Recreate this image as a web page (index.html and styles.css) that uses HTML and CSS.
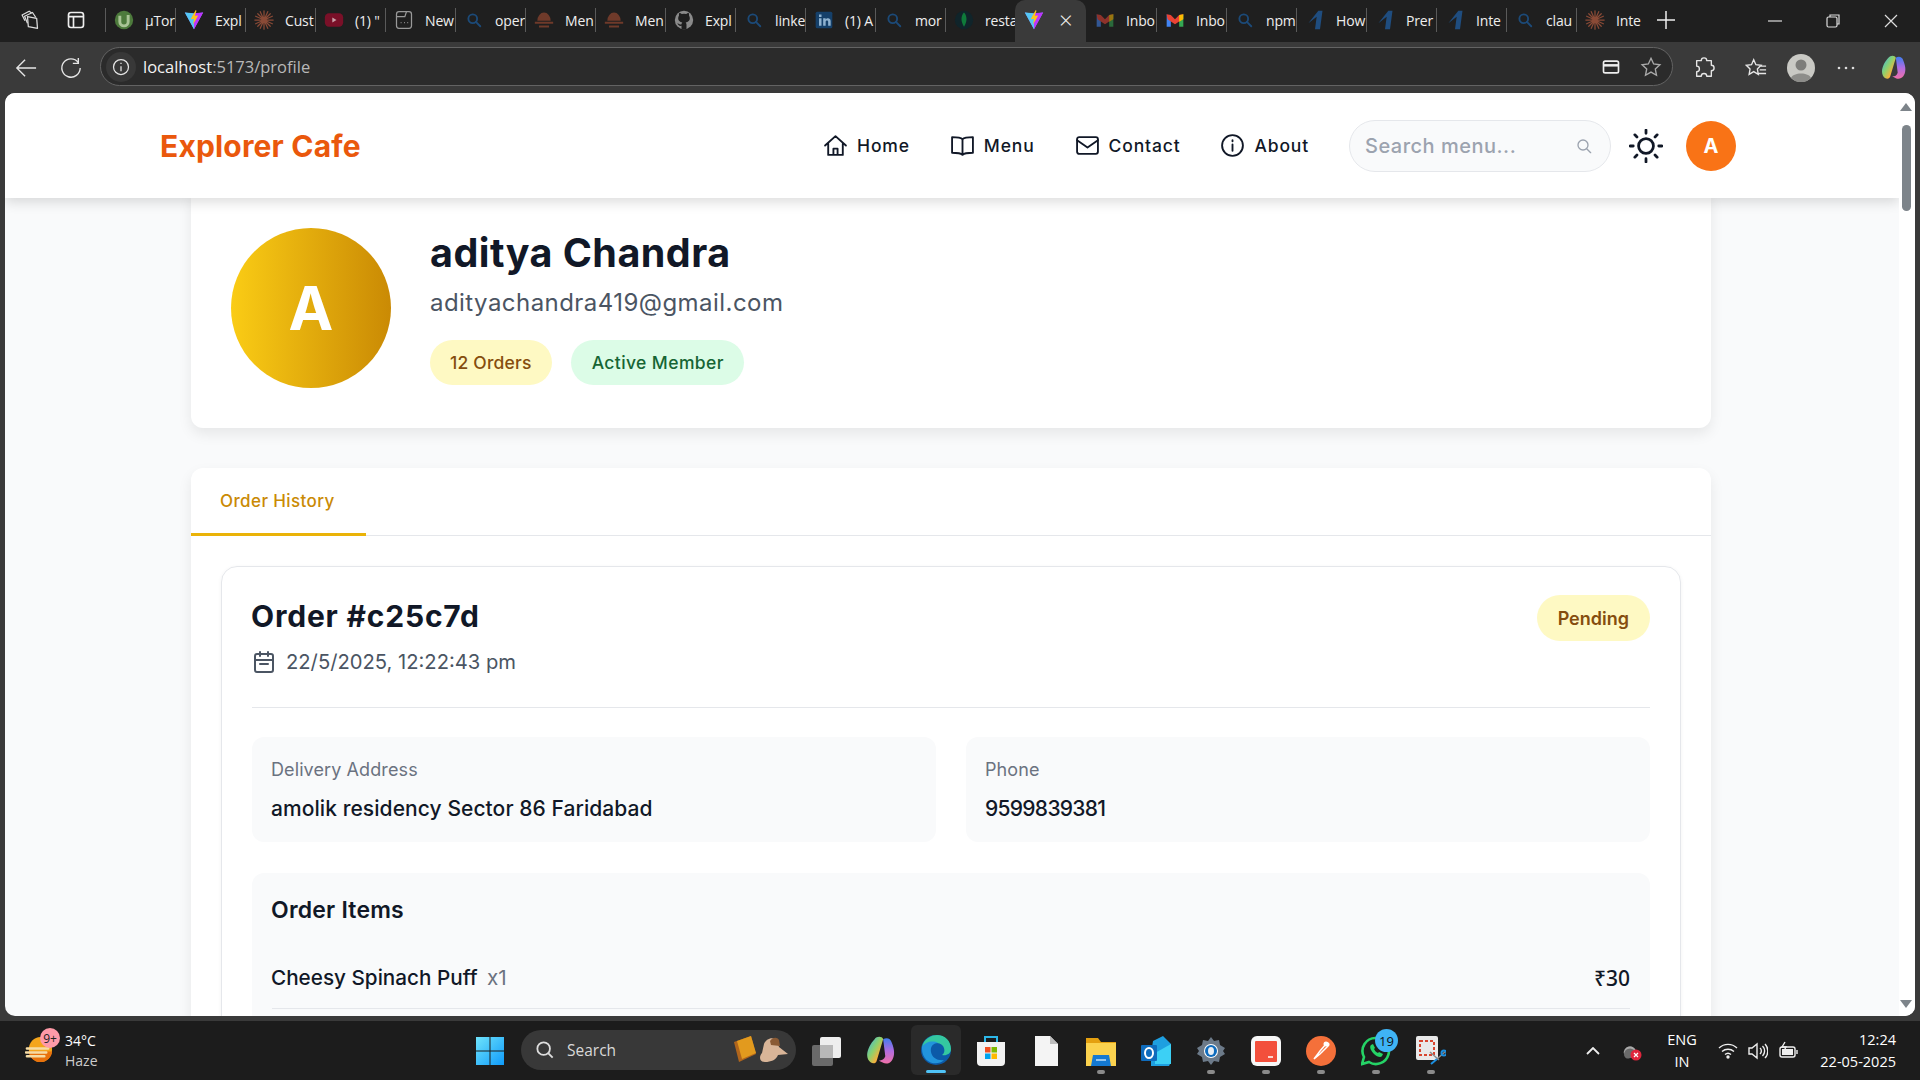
FILE: index.html
```html
<!DOCTYPE html>
<html lang="en">
<head>
<meta charset="utf-8">
<title>Explorer Cafe</title>
<link rel="stylesheet" href="styles.css">
</head>
<body>
<svg class="defs" width="0" height="0" aria-hidden="true">
  <defs><linearGradient id="cp" x1="0" y1="0" x2="1" y2="1"><stop offset="0" stop-color="#2fb5f0"/><stop offset=".45" stop-color="#8ed16c"/><stop offset=".72" stop-color="#f5b13c"/><stop offset="1" stop-color="#f0476f"/></linearGradient>
  <linearGradient id="cp2" x1="0" y1="0" x2="0" y2="1"><stop offset="0" stop-color="#3f7df0"/><stop offset=".5" stop-color="#b06ce0"/><stop offset="1" stop-color="#f070a8"/></linearGradient></defs>
  <symbol id="vite" viewBox="0 0 24 24"><path d="M1 3l10 1.500L23 3 12 23z" fill="#7d78ff"/><path d="M1 3l11 20V4z" fill="#55c7f5"/><path d="M12 4l11-1-11 20z" fill="#bd34fe"/><path d="M14 0L8 11l4-.5-1 7 6-11-4 .5 2-6z" fill="#ffc517"/></symbol>
  <symbol id="claude" viewBox="0 0 24 24"><g stroke="#8a4a36" stroke-width="1.500" stroke-linecap="round"><path d="M12 1v22M1 12h22M4.500 4.500l15 15M19.500 4.500l-15 15M7.500 2l9 20M16.500 2l-9 20M2 7.500l20 9M22 7.500l-20 9"/></g></symbol>
  <symbol id="mag" viewBox="-4 -4 32 32"><circle cx="10" cy="10" r="7" fill="none" stroke="#1c4a78" stroke-width="3"/><path d="M15 15l7 7" stroke="#1c4a78" stroke-width="3" stroke-linecap="round"/></symbol>
  <symbol id="hat" viewBox="0 0 24 24"><path d="M4 13a8 10 0 0116 0z" fill="#6f3a2a"/><path d="M1 14h22v2.500H1zM6 18.500h12V21H6z" fill="#6f3a2a"/></symbol>
  <symbol id="gmail" viewBox="0 0 24 24"><path d="M2 5v15h5V11z" fill="#4285f4"/><path d="M22 5v15h-5V11z" fill="#34a853"/><path d="M2 5l5 1 5 5 5-5 5-1-1 6-9 6-9-6z" fill="#ea4335"/><path d="M17 6l5-1v6l-5 3z" fill="#fbbc04"/></symbol>
  <symbol id="one" viewBox="0 0 24 24"><path d="M16 1h5l-3 22h-6l2-15-10 8z" fill="#1f4d7f"/></symbol>
</svg>

<div class="tabstrip">
  <div class="strip-left">
    <svg class="ic20" viewBox="0 0 24 24" fill="none" stroke="#ddd" stroke-width="1.500" stroke-linejoin="round"><path d="M9 8l11 2 1 12-11-2z"/><path d="M9 16L5.500 7.500 15 3l4 6"/><path d="M6 13L2.500 6 11 1.500l3 2"/></svg>
    <svg class="ic20" viewBox="0 0 24 24" fill="none" stroke="#eee" stroke-width="2"><rect x="3" y="3" width="18" height="18" rx="3"/><path d="M3 8h18M9 8v13"/></svg>
  </div>
  <div class="tabs">
    <div class="tab"><svg class="fav" viewBox="0 0 24 24"><circle cx="12" cy="12" r="11" fill="#4d7a3c"/><path d="M7 7v7a5 5 0 0010 0V6" fill="none" stroke="#a9c496" stroke-width="3.500"/></svg><span class="tab-text">µTor</span></div>
    <div class="tab"><svg class="fav"><use href="#vite"/></svg><span class="tab-text">Expl</span></div>
    <div class="tab"><svg class="fav"><use href="#claude"/></svg><span class="tab-text">Cust</span></div>
    <div class="tab"><svg class="fav" viewBox="0 0 24 24"><rect x="1" y="4" width="22" height="16" rx="5" fill="#7a1028"/><path d="M10 9l5 3-5 3z" fill="#c9a0a8"/></svg><span class="tab-text">(1) "</span></div>
    <div class="tab"><svg class="fav" viewBox="0 0 24 24" fill="none" stroke="#999" stroke-width="1.500"><rect x="3" y="2" width="18" height="20" rx="3"/><path d="M3 8h10l2-6M8 15h1M12 15h1M16 15h1"/></svg><span class="tab-text">New</span></div>
    <div class="tab"><svg class="fav"><use href="#mag"/></svg><span class="tab-text">oper</span></div>
    <div class="tab"><svg class="fav"><use href="#hat"/></svg><span class="tab-text">Men</span></div>
    <div class="tab"><svg class="fav"><use href="#hat"/></svg><span class="tab-text">Men</span></div>
    <div class="tab"><svg class="fav" viewBox="0 0 24 24"><circle cx="12" cy="12" r="11" fill="#8a8a8a"/><path d="M9 23v-4c-3 .5-4-1-5-3 2 .5 3 2 5 1 0-1 .5-1.500 1-2-3-.5-5-2-5-5 0-1.500.5-2.500 1-3.500-.2-1 0-2 .3-3 1.200 0 2.200.7 3.200 1.300a10 10 0 015 0c1-.6 2-1.300 3.200-1.300.3 1 .5 2 .3 3 .5 1 1 2 1 3.500 0 3-2 4.500-5 5 .7.600 1 1.500 1 2.500V23z" fill="#1e1e1e"/></svg><span class="tab-text">Expl</span></div>
    <div class="tab"><svg class="fav"><use href="#mag"/></svg><span class="tab-text">linke</span></div>
    <div class="tab"><svg class="fav" viewBox="0 0 24 24"><rect x="2" y="2" width="20" height="20" rx="2" fill="#15406a"/><path d="M6 10h3v9H6zM6 5.500h3v3H6zM11 10h3v1.500c1-2 6-2.500 6 2V19h-3v-5c0-2-3-2-3 0v5h-3z" fill="#8fb2d0"/></svg><span class="tab-text">(1) A</span></div>
    <div class="tab"><svg class="fav"><use href="#mag"/></svg><span class="tab-text">mor</span></div>
    <div class="tab"><svg class="fav" viewBox="0 0 24 24"><circle cx="12" cy="12" r="11" fill="#10242a"/><path d="M12 3c4 4 4 11 0 17-4-6-4-13 0-17z" fill="#0f7a3a"/></svg><span class="tab-text">resta</span></div>
    <div class="tab tab-active"><svg class="fav"><use href="#vite"/></svg><span class="tab-close">×</span></div>
    <div class="tab"><svg class="fav tab-dim"><use href="#gmail"/></svg><span class="tab-text">Inbo</span></div>
    <div class="tab"><svg class="fav"><use href="#gmail"/></svg><span class="tab-text">Inbo</span></div>
    <div class="tab"><svg class="fav"><use href="#mag"/></svg><span class="tab-text">npm</span></div>
    <div class="tab"><svg class="fav"><use href="#one"/></svg><span class="tab-text">How</span></div>
    <div class="tab"><svg class="fav"><use href="#one"/></svg><span class="tab-text">Prer</span></div>
    <div class="tab"><svg class="fav"><use href="#one"/></svg><span class="tab-text">Inte</span></div>
    <div class="tab"><svg class="fav"><use href="#mag"/></svg><span class="tab-text">clau</span></div>
    <div class="tab"><svg class="fav"><use href="#claude"/></svg><span class="tab-text">Inte</span></div>
  </div>
  <svg class="new-tab" viewBox="0 0 20 20" stroke="#eee" stroke-width="1.500"><path d="M10 1v18M1 10h18"/></svg>
  <div class="win-controls">
    <svg class="win" viewBox="0 0 14 14" stroke="#ddd" stroke-width="1.200" fill="none"><path d="M0 7h14"/></svg>
    <svg class="win" viewBox="0 0 14 14" stroke="#ddd" stroke-width="1.200" fill="none"><rect x="1" y="3" width="10" height="10" rx="1.500"/><path d="M4 3V1h9v9h-2"/></svg>
    <svg class="win" viewBox="0 0 14 14" stroke="#ddd" stroke-width="1.200" fill="none"><path d="M1 1l12 12M13 1L1 13"/></svg>
  </div>
</div>

<div class="toolbar">
  <svg class="tool tool-back" viewBox="0 0 24 24" fill="none" stroke="#e6e6e6" stroke-width="1.500"><path d="M23 12H2M11 3l-9 9 9 9"/></svg>
  <svg class="tool tool-reload" viewBox="0 0 24 24" fill="none" stroke="#e6e6e6" stroke-width="1.500"><path d="M20 6a10 10 0 102 6"/><path d="M20 1v6h-6"/></svg>
  <div class="addr">
    <span class="addr-info"><svg class="ic20" viewBox="0 0 24 24" fill="none" stroke="#e6e6e6" stroke-width="1.500"><circle cx="12" cy="12" r="9"/><path d="M12 11v6M12 7v1.500"/></svg></span>
    <span class="url"><b>localhost</b>:5173/profile</span>
    <span class="addr-end">
      <svg class="ic20" viewBox="0 0 24 24" fill="none" stroke="#eee" stroke-width="2"><rect x="3" y="5" width="18" height="14" rx="2"/><path d="M3 10h18" stroke-width="3"/></svg>
      <svg class="ic22" viewBox="0 0 24 24" fill="none" stroke="#aaa" stroke-width="1.500"><path d="M12 2.500l2.900 6.200 6.800.8-5 4.700 1.300 6.800-6-3.400-6 3.400 1.300-6.800-5-4.700 6.800-.8z"/></svg>
    </span>
  </div>
  <div class="tool-right">
    <svg class="ic22 tr-ext" viewBox="0 0 24 24" fill="none" stroke="#e6e6e6" stroke-width="1.500"><path d="M9 4a3 3 0 016 0h5v5a3 3 0 010 6v6h-5a3 3 0 00-6 0H4v-5a3 3 0 000-6V4z" stroke-linejoin="round"/></svg>
    <svg class="ic22 tr-fav" viewBox="0 0 24 24" fill="none" stroke="#e6e6e6" stroke-width="1.500"><path d="M9.500 3l2.400 5.400 5.600.7-4 4 1 5.900-5-3-5 3 1-5.900-4-4 5.600-.7zM16 10h7M16 14h7M15 18h8"/></svg>
    <svg class="tool-avatar" viewBox="0 0 28 28"><circle cx="14" cy="14" r="14" fill="#c9c9c4"/><circle cx="14" cy="11" r="5.500" fill="#7d7d7a"/><path d="M4 24c2-6 18-6 20 0a14 14 0 01-20 0z" fill="#8d8d8a"/></svg>
    <svg class="ic20 tr-dots" viewBox="0 0 20 20" fill="#ddd"><circle cx="3" cy="10" r="1.300"/><circle cx="10" cy="10" r="1.300"/><circle cx="17" cy="10" r="1.300"/></svg>
    <svg class="tool-copilot" viewBox="0 0 28 28"><path d="M16 3c3-2 7-1 8 3 3 7 3 13 0 17-2 3-6 3-8 2l-4-2c3 0 5-1 6-4z" fill="url(#cp2)"/><path d="M8 3c2-3 7-3 8 0l-6 20c-1 4-6 3-8-1-3-6 2-15 6-19z" fill="url(#cp)"/></svg>
  </div>
</div>

<div class="viewport">
  <div class="page">
    <header class="site-header">
      <div class="logo">Explorer Cafe</div>
      <nav class="nav">
        <a class="nav-link"><svg class="nav-ic" viewBox="0 0 24 24"><path d="M2 12l10-9 10 9M5 10v11h14V10M10 21v-6h4v6"/></svg>Home</a>
        <a class="nav-link"><svg class="nav-ic" viewBox="0 0 24 24"><path d="M12 6C10 4 6 4 2 4v15c4 0 8 0 10 2 2-2 6-2 10-2V4c-4 0-8 0-10 2zM12 6v15"/></svg>Menu</a>
        <a class="nav-link"><svg class="nav-ic" viewBox="0 0 24 24"><rect x="2" y="4" width="20" height="16" rx="2"/><path d="M2 7l10 7 10-7"/></svg>Contact</a>
        <a class="nav-link"><svg class="nav-ic" viewBox="0 0 24 24"><circle cx="12" cy="12" r="10"/><path d="M12 11v6M12 7v1"/></svg>About</a>
      </nav>
      <div class="search"><span class="search-ph">Search menu...</span><svg class="search-ic" viewBox="0 0 24 24"><circle cx="10.500" cy="10.500" r="7.500"/><path d="M16 16l6 6"/></svg></div>
      <svg class="sun" viewBox="0 0 32 32"><circle cx="16" cy="16" r="7"/><path d="M16 1v3M16 28v3M1 16h3M28 16h3M5.500 5.500l2 2M24.500 24.500l2 2M5.500 26.500l2-2M24.500 7.500l2-2"/></svg>
      <div class="head-avatar">A</div>
    </header>
    <main class="content">
      <section class="card profile">
        <div class="avatar">A</div>
        <div class="who">
          <h1 class="name">aditya Chandra</h1>
          <p class="email">adityachandra419@gmail.com</p>
          <div class="chips"><span class="chip chip-y">12 Orders</span><span class="chip chip-g">Active Member</span></div>
        </div>
      </section>
      <section class="card orders">
        <div class="tabs-row"><div class="page-tab">Order History</div></div>
        <div class="order-wrap">
          <article class="order">
            <div class="order-head">
              <div>
                <h2 class="order-id">Order #c25c7d</h2>
                <div class="order-date"><svg class="cal" viewBox="0 0 24 24"><rect x="3" y="4" width="18" height="18" rx="2"/><path d="M16 2v4M8 2v4M3 10h18M8 14h8"/></svg>22/5/2025, 12:22:43 pm</div>
              </div>
              <span class="status">Pending</span>
            </div>
            <div class="info-grid">
              <div class="info"><div class="info-label">Delivery Address</div><div class="info-val">amolik residency Sector 86 Faridabad</div></div>
              <div class="info"><div class="info-label">Phone</div><div class="info-val info-digits">9599839381</div></div>
            </div>
            <div class="items">
              <h3 class="items-title">Order Items</h3>
              <div class="item"><span class="item-name">Cheesy Spinach Puff <span class="qty">x1</span></span><span class="price">₹30</span></div>
            </div>
          </article>
        </div>
      </section>
    </main>
  </div>
  <div class="scrollbar">
    <span class="sb-arrow sb-up"></span>
    <span class="sb-thumb"></span>
    <span class="sb-arrow sb-down"></span>
  </div>
</div>

<div class="taskbar">
  <div class="weather">
    <div class="weather-ic">
      <svg class="weather-sun" viewBox="0 0 30 30"><ellipse cx="16" cy="15" rx="12" ry="13" fill="#f4a51c"/><path d="M16 28c7 0 12-6 12-11H4c0 5 5 11 12 11z" fill="#e8720c"/><path d="M2 14h22M1 18h21M2 22h18" stroke="#f6dca4" stroke-width="2.600" stroke-linecap="round"/></svg>
      <span class="wbadge">9+</span>
    </div>
    <div class="wtext"><div>34°C</div><div class="haze">Haze</div></div>
  </div>
  <div class="tb-center">
    <svg class="tb-ic tb-win" viewBox="0 0 30 30"><defs><linearGradient id="wg" x1="0" y1="0" x2="1" y2="1"><stop offset="0" stop-color="#6fe3fb"/><stop offset="1" stop-color="#0f9bfa"/></linearGradient></defs><path d="M1 1h13.500v13.500H1zM15.500 1H29v13.500H15.500zM1 15.500h13.500V29H1zM15.500 15.500H29V29H15.500z" fill="url(#wg)"/></svg>
    <div class="tb-search">
      <svg class="tb-search-ic" viewBox="0 0 20 20" fill="none" stroke="#ddd" stroke-width="2"><circle cx="8.500" cy="8.500" r="7"/><path d="M13.500 13.500l5 5"/></svg>
      <span class="tb-search-text">Search</span>
      <svg class="tb-hero" viewBox="0 0 58 30"><path d="M2 7l17-6 5 18-17 8z" fill="#b0651c"/><path d="M5 6l14-5 5 17-14 6z" fill="#e29a1e"/><path d="M33 27c-6 0-6-6-3-9l2-9c2-6 10-8 13-3l2 6 9 7-10 1c-2 5-7 7-13 7z" fill="#d9b598"/><path d="M38 6c3-4 7-4 9-1l1 6-9-1z" fill="#8a5a34"/></svg>
    </div>
    <svg class="tb-ic" viewBox="0 0 30 30"><rect x="9" y="1" width="21" height="21" rx="2" fill="#eee"/><rect x="1" y="9" width="21" height="21" rx="2" fill="#6a6a6a"/><rect x="9" y="9" width="13" height="13" fill="#b8b8b8"/></svg>
    <svg class="tb-ic" viewBox="0 0 28 28"><path d="M16 3c3-2 7-1 8 3 3 7 3 13 0 17-2 3-6 3-8 2l-4-2c3 0 5-1 6-4z" fill="url(#cp2)"/><path d="M8 3c2-3 7-3 8 0l-6 20c-1 4-6 3-8-1-3-6 2-15 6-19z" fill="url(#cp)"/></svg>
    <div class="tb-tile">
      <svg class="tb-ic" viewBox="0 0 30 30"><circle cx="15" cy="15" r="15" fill="#0c5aa8"/><path d="M1 12C3 3 11 0 16 0c8 0 14 6 14 14 0 5-5 7-9 6 3-2 3-6 1-9C18 6 8 7 1 12z" fill="#34c7a0"/><path d="M1 12C4 7 12 5 17 8c-5 0-8 4-7 9 1 6 7 9 13 8-7 7-23 3-22-13z" fill="#2294dc"/></svg>
      <span class="tb-active"></span>
    </div>
    <svg class="tb-ic" viewBox="0 0 30 30"><path d="M9 6V1h12v5" fill="none" stroke="#2cb7e8" stroke-width="2"/><path d="M1 6h28v20a4 4 0 01-4 4H5a4 4 0 01-4-4z" fill="#f2f2f2"/><path d="M9 11h5.500v5.500H9z" fill="#f25022"/><path d="M15.500 11H21v5.500h-5.500z" fill="#7fba00"/><path d="M9 17.500h5.500V23H9z" fill="#00a4ef"/><path d="M15.500 17.500H21V23h-5.500z" fill="#ffb900"/></svg>
    <svg class="tb-ic" viewBox="0 0 30 30"><path d="M4 0h15l8 8v22H4z" fill="#f4f4f4"/><path d="M19 0l8 8h-8z" fill="#bdbdbd"/></svg>
    <span class="tb-app tb-dot"><svg class="tb-ic" viewBox="0 0 30 30"><path d="M0 2h12l3 4h15v24H0z" fill="#e4a010"/><path d="M0 7h30v23H0z" fill="#fbd24e"/><path d="M5 30l2-11h16l2 11z" fill="#1479d2"/><path d="M10 24h10" stroke="#bfe0fa" stroke-width="1.500"/></svg></span>
    <svg class="tb-ic" viewBox="0 0 30 30"><path d="M12 5L22 0l8 8v18l-2 4H10V18z" fill="#1e9fe0"/><path d="M14 17l16-9v20H14z" fill="#3cd0f5"/><rect x="0" y="9" width="16" height="16" rx="1" fill="#0f6cbd"/><ellipse cx="8" cy="17" rx="4" ry="5" fill="none" stroke="#fff" stroke-width="2"/></svg>
    <span class="tb-app tb-dot"><svg class="tb-ic" viewBox="0 0 30 30"><path d="M15 1l3 4 5-1 1 5 5 3-2 3 2 3-5 3-1 5-5-1-3 4-3-4-5 1-1-5-5-3 2-3-2-3 5-3 1-5 5 1z" fill="#6c7a89"/><circle cx="15" cy="15" r="7" fill="#fff"/><circle cx="15" cy="15" r="6" fill="#0f6cbd"/><ellipse cx="15" cy="15" rx="3" ry="4" fill="#e8eef4"/></svg></span>
    <span class="tb-app tb-dot"><svg class="tb-ic" viewBox="0 0 30 30"><rect width="30" height="30" rx="6" fill="#f7f7f7"/><rect x="4" y="5" width="22" height="21" rx="1" fill="#f34f3c"/><path d="M17 21h5" stroke="#fff" stroke-width="1.500"/></svg></span>
    <span class="tb-app tb-dot"><svg class="tb-ic" viewBox="0 0 30 30"><circle cx="15" cy="15" r="15" fill="#f4703a"/><path d="M8 23l6-8 6-7c2-2 4 0 2 2l-8 8z" fill="none" stroke="#fff" stroke-width="1.500"/><circle cx="20" cy="8" r="2.500" fill="#fff"/></svg></span>
    <span class="tb-app tb-dot tb-wa"><svg class="tb-ic" viewBox="0 0 30 30"><path d="M15 2a13 13 0 11-7 24L1 28l2-7A13 13 0 0115 2z" fill="none" stroke="#25d366" stroke-width="2.600"/><path d="M10 9c-2 2 0 6 3 9s7 4 8 2l1-2-4-2-1 1c-2-1-3-2-4-4l1-1-2-4z" fill="#25d366"/></svg><span class="wa-badge">19</span></span>
    <span class="tb-app tb-dot"><svg class="tb-ic" viewBox="0 0 30 30"><rect width="22" height="24" rx="2" fill="#e9e9e9"/><rect x="4" y="5" width="14" height="14" fill="none" stroke="#d8452f" stroke-width="2" stroke-dasharray="3 2"/><path d="M14 16l9 8m7-9l-9 8" stroke="#8a8a8a" stroke-width="1.500"/><circle cx="28" cy="17" r="2.500" fill="none" stroke="#1c8fe0" stroke-width="2"/><path d="M21 23l-6 5" stroke="#1c8fe0" stroke-width="2"/></svg></span>
  </div>
  <div class="tray">
    <svg class="tray-chev" viewBox="0 0 14 8" fill="none" stroke="#eee" stroke-width="1.800"><path d="M1 7l6-6 6 6"/></svg>
    <span class="tray-cloud"><svg class="ic20" viewBox="0 0 20 20"><path d="M2 13a6 6 0 0112-3l4 3z" fill="#aaa"/><path d="M2 13a4 4 0 006 4h4V9a6 6 0 00-10 4z" fill="#6a6a6a"/><circle cx="14" cy="14" r="5.500" fill="#e0263c"/><path d="M12 12l4 4M16 12l-4 4" stroke="#fff" stroke-width="1.200"/></svg></span>
    <div class="lang"><div>ENG</div><div>IN</div></div>
    <div class="tray-ics">
      <svg class="ic20" viewBox="0 0 20 20" fill="none" stroke="#eee" stroke-width="1.400"><path d="M1 7a13 13 0 0118 0M4 10.500a9 9 0 0112 0M7 13.500a4.500 4.500 0 016 0"/><circle cx="10" cy="16" r="1" fill="#eee"/></svg>
      <svg class="ic20" viewBox="0 0 20 20" fill="none" stroke="#eee" stroke-width="1.400"><path d="M1 7v6h3l5 4V3L4 7zM12 7a4 4 0 010 6M14.500 5a7 7 0 010 10M17 3a10 10 0 010 14"/></svg>
      <svg class="ic20" viewBox="0 0 20 20" fill="none" stroke="#eee" stroke-width="1.400"><rect x="2" y="6" width="15" height="10" rx="2"/><path d="M19 9v4"/><rect x="4" y="8" width="11" height="6" fill="#eee" stroke="none"/><path d="M7 1L4 6h4L6 10" stroke="#eee"/></svg>
    </div>
    <div class="clock"><div>12:24</div><div>22-05-2025</div></div>
  </div>
</div>
</body>
</html>
```
FILE: styles.css
```css
* { box-sizing: border-box; }
html, body { margin: 0; height: 100%; overflow: hidden; }
body {
  display: flex; flex-direction: column; width: 1920px; height: 1080px;
  background: #3a3a3a; font-family: Inter, "Noto Sans", sans-serif; color: #111827;
}
.defs { position: absolute; }
h1, h2, h3, p { margin: 0; }
.ic20 { width: 20px; height: 20px; flex: none; }
.ic22 { width: 22px; height: 22px; flex: none; }

/* tab strip */
.tabstrip { height: 42px; flex: none; background: #1f1f1f; display: flex; align-items: stretch; font-family: "Open Sans", sans-serif; }
.strip-left { width: 105px; display: flex; align-items: center; gap: 26px; padding: 0 0 2px 20px; flex: none; }
.tabs { display: flex; flex: none; }
.tab { width: 70px; flex: none; display: flex; align-items: center; gap: 11px; padding: 0 0 2px 9px; }
.tab { background: linear-gradient(#5a5a5a, #5a5a5a) left 8px / 1px 24px no-repeat; }
.fav { width: 20px; height: 20px; flex: none; }
.tab-dim { opacity: .55; }
.tab-text { color: #eee; font-size: 14px; white-space: nowrap; letter-spacing: -.15px; }
.tab-active { background: #3a3a3a; border-radius: 10px 10px 0 0; gap: 15px; width: 71px; }
.tab-active + .tab { background: none; }
.tab-close { color: #eee; font-size: 24px; line-height: 1; font-weight: 300; }
.new-tab { width: 20px; height: 20px; align-self: center; margin: 0 0 2px 10px; flex: none; }
.win-controls { margin-left: auto; display: flex; align-items: center; gap: 44px; padding-right: 22px; }
.win { width: 14px; height: 14px; }

/* toolbar */
.toolbar { height: 51px; flex: none; background: #3a3a3a; display: flex; align-items: center; padding-left: 15px; }
.tool { width: 22px; height: 22px; flex: none; }
.tool-back { margin-right: 23px; }
.tool-reload { margin-right: 18px; }
.addr { width: 1573px; height: 39px; border: 1px solid #636363; border-radius: 20px; background: #2b2b2b; display: flex; align-items: center; padding: 0 10px 0 5px; margin-top: -2px; }
.addr-info { width: 30px; height: 30px; border-radius: 50%; background: #383838; display: flex; align-items: center; justify-content: center; }
.url { margin-left: 7px; font-family: "Open Sans", sans-serif; font-size: 16.500px; color: #b8b8b8; }
.url b { font-weight: 400; color: #f2f2f2; }
.addr-end { margin-left: auto; display: flex; align-items: center; gap: 19px; }
.tool-right { display: flex; align-items: center; margin-left: 20px; }
.tr-fav { margin-left: 30px; }
.tool-avatar { width: 28px; height: 28px; margin-left: 20px; flex: none; }
.tr-dots { margin-left: 21px; }
.tool-copilot { width: 26px; height: 26px; margin-left: 25px; flex: none; }

/* viewport */
.viewport { height: 923px; flex: none; margin: 0 5px; background: #f9fafb; border-radius: 10px; overflow: hidden; display: flex; }
.page { width: 1894px; flex: none; display: flex; flex-direction: column; overflow: hidden; }
.site-header { height: 105px; flex: none; background: #fff; box-shadow: 0 4px 12px rgba(0,0,0,.14); position: relative; z-index: 2; display: flex; align-items: center; padding: 0 163px 0 155px; }
.logo { font-size: 30px; font-weight: 700; color: #ea580c; margin-right: auto; letter-spacing: .17px; }
.nav { display: flex; gap: 40px; margin-right: 40px; }
.nav-link { display: flex; align-items: center; gap: 9px; font-size: 17.500px; font-weight: 450; letter-spacing: .85px; color: #111827; }
.nav-ic { width: 25px; height: 25px; fill: none; stroke: #111827; stroke-width: 1.800; stroke-linejoin: round; stroke-linecap: round; }
.search { width: 262px; height: 52px; border: 1px solid #e5e7eb; border-radius: 26px; background: #f9fafb; display: flex; align-items: center; justify-content: space-between; padding: 0 18px 0 15px; }
.search-ph { font-size: 20px; color: #9ca3af; letter-spacing: .5px; font-weight: 450; }
.search-ic { width: 16px; height: 16px; fill: none; stroke: #9ca3af; stroke-width: 2; stroke-linecap: round; }
.sun { width: 34px; height: 34px; margin: 0 23px 0 18px; fill: none; stroke: #111827; stroke-width: 2.600; stroke-linecap: round; }
.head-avatar { width: 50px; height: 50px; border-radius: 50%; background: #f97316; color: #fff; font-size: 20px; font-weight: 700; display: flex; align-items: center; justify-content: center; }

.content { flex: 1; padding: 0 188px 0 186px; display: flex; flex-direction: column; gap: 40px; }
.card { background: #fff; border-radius: 12px; box-shadow: 0 6px 14px rgba(0,0,0,.08); }
.profile { height: 240px; margin-top: -10px; flex: none; display: flex; align-items: flex-start; padding: 40px; gap: 39px; }
.avatar { width: 160px; height: 160px; flex: none; border-radius: 50%; background: linear-gradient(90deg, #facc15, #ca8a04); color: #fff; font-size: 60px; font-weight: 700; display: flex; align-items: center; justify-content: center; }
.name { font-size: 39.500px; font-weight: 700; line-height: 48px; letter-spacing: .45px; margin-top: 1px; }
.email { font-size: 24px; color: #4b5563; line-height: 36px; margin-top: 8px; letter-spacing: .45px; }
.chips { display: flex; gap: 19px; margin-top: 19px; }
.chip { height: 45px; border-radius: 23px; padding: 0 20px; font-size: 17.500px; font-weight: 450; letter-spacing: .2px; display: flex; align-items: center; }
.chip-y { background: #fef9c3; color: #854d0e; }
.chip-g { background: #dcfce7; color: #166534; letter-spacing: .4px; padding: 0 20px 0 21px; }

.orders { flex: 1; border-radius: 12px 12px 0 0; }
.tabs-row { height: 68px; border-bottom: 1px solid #e5e7eb; }
.page-tab { width: 175px; height: 68px; border-bottom: 3px solid #eab308; color: #ca8a04; font-size: 17px; font-weight: 450; letter-spacing: .4px; display: flex; align-items: center; padding-left: 29px; }
.order-wrap { padding: 30px 30px 0; }
.order { border: 1px solid #e5e7eb; border-radius: 16px 16px 0 0; padding: 30px 30px 0; box-shadow: 0 1px 4px rgba(0,0,0,.05); height: 470px; }
.order-head { display: flex; justify-content: space-between; align-items: flex-start; padding-bottom: 30px; border-bottom: 1px solid #e5e7eb; height: 111px; }
.order-id { font-size: 30px; font-weight: 700; line-height: 40px; letter-spacing: .8px; margin: -1px 0 0 -1px; }
.order-date { display: flex; align-items: center; gap: 10px; font-size: 20.200px; color: #4b5563; margin-top: 8px; line-height: 36px; }
.cal { width: 24px; height: 24px; fill: none; stroke: #4b5563; stroke-width: 2; stroke-linecap: round; }
.status { height: 46px; border-radius: 23px; background: #fef9c3; color: #854d0e; font-size: 18px; font-weight: 600; display: flex; align-items: center; padding: 0 21px; margin-top: -2px; }
.info-grid { display: grid; grid-template-columns: 1fr 1fr; gap: 30px; margin-top: 29px; }
.info { height: 105px; background: #f9fafb; border-radius: 12px; padding: 20px 19px; }
.info-label { font-size: 18px; color: #6b7280; line-height: 26px; letter-spacing: .1px; }
.info-val { font-size: 21px; font-weight: 500; line-height: 30px; margin-top: 11px; letter-spacing: .07px; }
.info-digits { letter-spacing: -.7px; }
.items { margin-top: 31px; background: #f9fafb; border-radius: 12px 12px 0 0; padding: 19px 20px 0; height: 200px; }
.items-title { font-size: 23px; font-weight: 600; line-height: 36px; letter-spacing: .2px; margin-left: -1px; }
.item { display: flex; justify-content: space-between; align-items: center; height: 52px; margin-top: 29px; padding-bottom: 10px; border-bottom: 1px solid #e5e7eb; font-size: 20.700px; font-weight: 500; }
.item-name { margin-left: -1px; }
.qty { color: #6b7280; font-weight: 400; margin-left: 4px; }
.price { font-weight: 500; font-size: 21px; font-family: "Noto Sans", Inter, sans-serif; }

.scrollbar { width: 16px; flex: none; background: #fff; display: flex; flex-direction: column; align-items: center; padding: 10px 2px 8px 0; }
.sb-thumb { width: 9px; height: 86px; border-radius: 5px; background: #7d848a; margin-top: 14px; }
.sb-arrow { width: 0; height: 0; border-left: 6px solid transparent; border-right: 6px solid transparent; }
.sb-up { border-bottom: 8px solid #7d848a; }
.sb-down { border-top: 8px solid #7d848a; margin-top: auto; }

/* taskbar */
.taskbar { height: 59px; margin-top: 5px; flex: none; background: #1c1c1c; display: flex; align-items: flex-start; color: #fff; font-family: "Open Sans", sans-serif; }
.weather { width: 475px; flex: none; display: flex; padding: 7px 0 0 25px; gap: 11px; }
.weather-ic { position: relative; width: 29px; height: 40px; }
.weather-sun { position: absolute; top: 7px; left: 0; width: 29px; height: 29px; }
.wbadge { position: absolute; left: 15px; top: 0; width: 20px; height: 20px; border-radius: 50%; background: #ff9aa8; color: #222; font-size: 12px; display: flex; align-items: center; justify-content: center; }
.wtext { font-size: 14px; line-height: 20px; margin-top: 3px; }
.haze { color: #ccc; }
.tb-center { display: flex; align-items: flex-start; flex: none; width: 985px; }
.tb-center > * { margin-right: 25px; flex: none; }
.tb-ic { width: 30px; height: 30px; display: block; margin-top: 15px; flex: none; }
.tb-center > .tb-win { margin-right: 16px; }
.tb-center > .tb-search { margin-right: 15px; }
.tb-search { width: 275px; height: 40px; margin-top: 9px; border-radius: 20px; background: #383838; display: flex; align-items: center; padding: 0 6px 0 15px; }
.tb-search-ic { width: 18px; height: 18px; }
.tb-search-text { margin-left: 13px; font-size: 15.500px; color: #d8d8d8; }
.tb-hero { width: 58px; height: 30px; margin-left: auto; }
.tb-center > .tb-tile { margin: 4px 15px 0 -10px; }
.tb-tile { width: 50px; height: 50px; border-radius: 6px; background: #2a2a2a; display: flex; flex-direction: column; align-items: center; }
.tb-tile .tb-ic { margin-top: 10px; }
.tb-active { width: 20px; height: 3px; border-radius: 2px; background: #4fc3f7; margin-top: 5px; }
.tb-app { position: relative; display: block; width: 30px; height: 59px; }
.tb-dot::after { content: ""; position: absolute; left: 11px; top: 49px; width: 8px; height: 4px; border-radius: 2px; background: #8a8a8a; }
.wa-badge { position: absolute; left: 14px; top: 8px; width: 23px; height: 23px; border-radius: 50%; background: #3fb4f5; color: #111; font-size: 13px; display: flex; align-items: center; justify-content: center; }
.tray { flex: 1; display: flex; align-items: center; height: 59px; font-size: 14px; }
.tray-chev { width: 14px; height: 8px; margin-left: 126px; }
.tray-cloud { margin-left: 22px; display: flex; }
.lang { margin-left: 22px; text-align: center; line-height: 22px; width: 36px; font-size: 14.500px; }
.tray-ics { margin-left: 18px; display: flex; gap: 10px; }
.clock { margin-left: auto; margin-right: 24px; text-align: right; line-height: 22px; font-size: 14.500px; }
```
